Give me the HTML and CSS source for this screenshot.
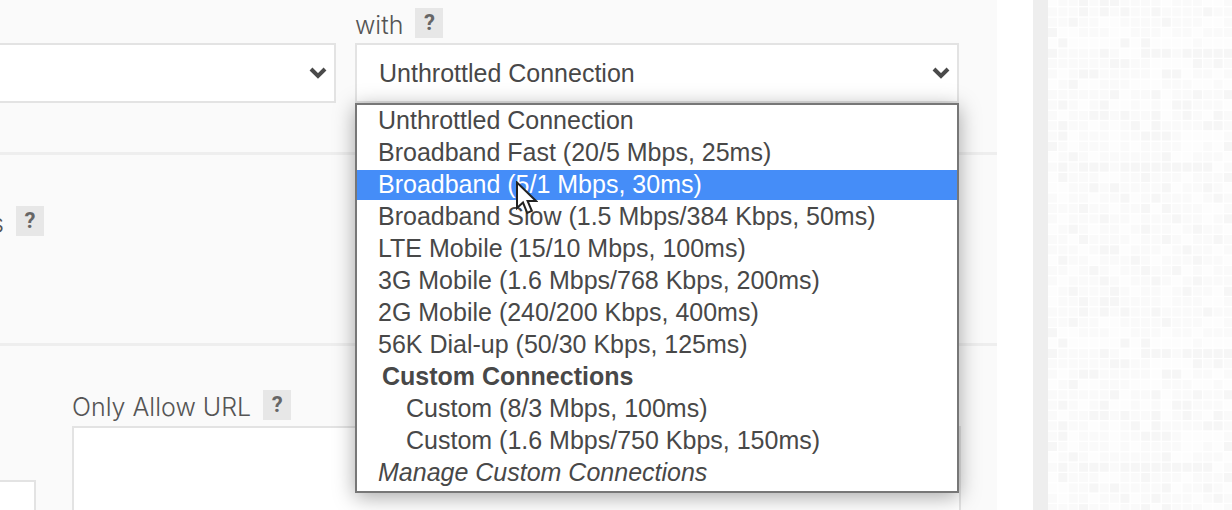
FILE: index.html
```html
<!DOCTYPE html>
<html lang="en">
<head>
<meta charset="utf-8">
<title>Test Settings</title>
<link rel="stylesheet" href="styles.css">
</head>
<body>
<div class="page">
  <main class="panel">
    <section class="section section-connection">
      <div class="field field-browser">
        <div class="label-row"></div>
        <div class="select-wrap">
          <select class="select select-cut" aria-label="Browser"><option></option></select>
          <svg class="chevron" viewBox="0 0 18 12" aria-hidden="true"><path d="M2 2l7 7 7-7"/></svg>
        </div>
      </div>
      <div class="field">
        <div class="label-row">
          <label for="connection">with</label>
          <button class="help" type="button" aria-label="Help: connection">?</button>
        </div>
        <div class="select-wrap">
          <select class="select" id="connection"><option>Unthrottled Connection</option></select>
          <svg class="chevron" viewBox="0 0 18 12" aria-hidden="true"><path d="M2 2l7 7 7-7"/></svg>
          <ul class="menu" role="listbox" aria-label="Connection">
            <li class="option" role="option">Unthrottled Connection</li>
            <li class="option" role="option">Broadband Fast (20/5 Mbps, 25ms)</li>
            <li class="option option-active" role="option" aria-selected="true">Broadband (5/1 Mbps, 30ms)
              <svg class="pointer" viewBox="0 0 22 34" aria-hidden="true"><path d="M1 1.5V27l6-5.5 4.2 10.3 4.6-2-4.2-9.8H20z"/></svg>
            </li>
            <li class="option" role="option">Broadband Slow (1.5 Mbps/384 Kbps, 50ms)</li>
            <li class="option" role="option">LTE Mobile (15/10 Mbps, 100ms)</li>
            <li class="option" role="option">3G Mobile (1.6 Mbps/768 Kbps, 200ms)</li>
            <li class="option" role="option">2G Mobile (240/200 Kbps, 400ms)</li>
            <li class="option" role="option">56K Dial-up (50/30 Kbps, 125ms)</li>
            <li class="option option-group" role="presentation">Custom Connections</li>
            <li class="option option-child" role="option">Custom (8/3 Mbps, 100ms)</li>
            <li class="option option-child" role="option">Custom (1.6 Mbps/750 Kbps, 150ms)</li>
            <li class="option option-manage" role="option">Manage Custom Connections</li>
          </ul>
        </div>
      </div>
    </section>
    <section class="section section-runs">
      <div class="label-row label-row-cut">
        <span class="cut-label"><span>s</span></span>
        <button class="help" type="button" aria-label="Help: runs">?</button>
      </div>
    </section>
    <section class="section section-urls">
      <input class="box box-side" type="text" aria-label="Value">
      <div class="field field-url">
        <div class="label-row label-row-url">
          <label for="allow">Only Allow URL</label>
          <button class="help" type="button" aria-label="Help: only allow URL">?</button>
        </div>
        <textarea class="box box-url" id="allow"></textarea>
      </div>
    </section>
  </main>
  <aside class="texture"><svg class="tiles" id="tiles" aria-hidden="true"></svg></aside>
</div>
<script src="tiles.js"></script>
</body>
</html>
```
FILE: styles.css
```css
* { box-sizing: border-box; }
body { margin: 0; background: #fff; color: #555; font-family: "Liberation Sans", Arial, sans-serif; font-size: 25px; }
.page { display: flex; height: 100vh; overflow: hidden; }
.panel { flex: 1; min-width: 0; display: flex; flex-direction: column; margin-right: 36px; background: #fafafa; }
.section { border-bottom: 3px solid #eee; }
.section-connection { display: grid; grid-template-columns: 336px 1fr; gap: 19px; padding: 0 38px 49px 0; }
.section-runs { padding: 51px 0 107px; }
.section-urls { flex: 1; display: grid; grid-template-columns: 36px 1fr; gap: 36px; padding-right: 36px; border-bottom: 0; }
.field-url { display: flex; flex-direction: column; padding-top: 44px; }
.label-row { display: flex; align-items: flex-start; gap: 12px; height: 43px; padding-top: 8px; font-family: Inter, Roboto, sans-serif; font-weight: 300; line-height: 34px; color: #555; }
.label-row-cut { height: 30px; padding-top: 0; }
.label-row-url { height: 36px; padding-top: 0; }
.cut-label { display: flex; justify-content: flex-end; width: 4px; overflow: hidden; }
.help { width: 28px; height: 30px; padding: 0; border: 0; background: #e7e7e7; color: #666; font: bold 22px/28px Roboto, sans-serif; }
.select-wrap { position: relative; display: grid; align-items: center; }
.select { grid-area: 1 / 1; width: 100%; height: 60px; padding: 0 22px; appearance: none; border: 2px solid #e3e3e3; border-radius: 0; background: #fff; color: #484848; font: inherit; }
.select-cut { border-left: 0; }
.chevron { grid-area: 1 / 1; justify-self: end; width: 18px; height: 12px; margin-right: 9px; pointer-events: none; }
.chevron path { fill: none; stroke: #4a4a4a; stroke-width: 4; }
.menu { position: absolute; z-index: 1; top: 100%; left: 0; right: 0; margin: 0; padding: 1px 0; list-style: none; border: 2px solid #777; background: #fff; box-shadow: 0 4px 20px rgba(0, 0, 0, .35); }
.option { position: relative; height: 32px; padding-left: 21px; line-height: 29px; color: #484848; white-space: nowrap; }
.option-active { border-bottom: 2px solid transparent; background: #458df8 padding-box; color: #fff; }
.option-group { padding-left: 25px; font-weight: bold; }
.option-child { padding-left: 49px; }
.option-manage { font-style: italic; }
.pointer { position: absolute; z-index: 2; left: 159px; top: 11px; width: 22px; height: 34px; }
.pointer path { fill: #fff; stroke: #222; stroke-width: 2; }
.box { width: 100%; border: 2px solid #e3e3e3; border-bottom: 0; border-radius: 0; background: #fff; font: inherit; resize: none; }
.box-side { height: auto; margin-top: 134px; border-left: 0; }
.box-url { flex: 1; }
.texture { flex: 0 0 199px; border-left: 15px solid #eee; background: #fff; }
.tiles { display: block; width: 100%; height: 100%; }
```
FILE: tiles.js
```js
// Shade level of each tile, one string per row; the rows repeat down the page.
const rows = [
  "011212211110111001", "111212121121111211", "112110011112111001", "200111001110110111",
  "020000020200001000", "211112100222122222", "111111221100002121", "101221111102201101",
  "012001110001110010", "111111201120112112", "121012001010221110", "101122121120121021",
  "121101012021111221", "120111011222100001", "210111010111100102", "012101111112001110",
  "121222122222222201", "021110011211101112", "001121211112011210", "101101120121110121",
  "111211011202111001", "101112110111211012", "012101101211012110", "110211110112101121",
  "111012201110121101", "021101112101112110", "110121011211201011", "101112101121012111",
  "012111210110121102"
];
const shades = ["#fdfdfd", "#fafafa", "#f6f6f6"];
const pitch = 10.35;
const ns = "http://www.w3.org/2000/svg";
const tiles = document.getElementById("tiles");
for (let r = 0; r * pitch < window.innerHeight + pitch; r++) {
  [...rows[r % rows.length]].forEach((level, c) => {
    const rect = document.createElementNS(ns, "rect");
    rect.setAttribute("x", c * pitch);
    rect.setAttribute("y", r * pitch - 3);
    rect.setAttribute("width", 9);
    rect.setAttribute("height", 9);
    rect.setAttribute("fill", shades[level]);
    tiles.append(rect);
  });
}
```
